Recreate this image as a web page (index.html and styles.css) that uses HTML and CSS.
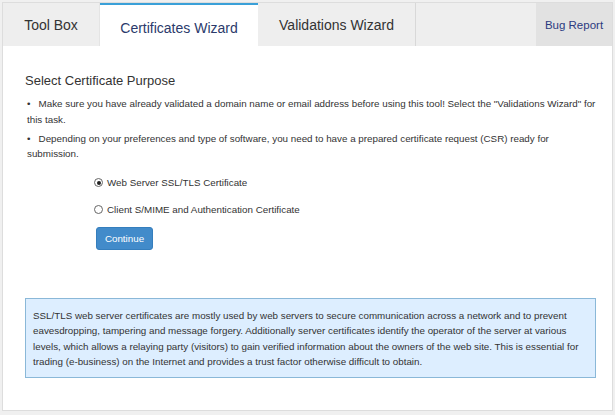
FILE: index.html
```html
<!DOCTYPE html>
<html>
<head>
<meta charset="utf-8">
<link rel="stylesheet" href="styles.css">
</head>
<body>
<div class="frame">
  <div class="tabs">
    <div class="tab tab-toolbox">Tool Box</div>
    <div class="tab tab-active">Certificates Wizard</div>
    <div class="tab tab-valid">Validations Wizard</div>
    <div class="tab-spacer"></div>
    <div class="tab-bug">Bug Report</div>
  </div>
  <div class="content">
    <h2 class="title">Select Certificate Purpose</h2>
    <p class="note">•&nbsp;&nbsp; Make sure you have already validated a domain name or email address before using this tool! Select the "Validations Wizard" for this task.</p>
    <p class="note">•&nbsp;&nbsp; Depending on your preferences and type of software, you need to have a prepared certificate request (CSR) ready for<br>submission.</p>
    <div class="options">
      <label class="opt"><span class="radio checked"></span>Web Server SSL/TLS Certificate</label>
      <label class="opt"><span class="radio"></span>Client S/MIME and Authentication Certificate</label>
      <div><button class="btn">Continue</button></div>
    </div>
    <div class="info">SSL/TLS web server certificates are mostly used by web servers to secure communication across a network and to prevent eavesdropping, tampering and message forgery. Additionally server certificates identify the operator of the server at various levels, which allows a relaying party (visitors) to gain verified information about the owners of the web site. This is essential for trading (e-business) on the Internet and provides a trust factor otherwise difficult to obtain.</div>
  </div>
</div>
</body>
</html>
```
FILE: styles.css
```css
html, body { margin: 0; padding: 0; }
body {
  background: #f0f0f0;
  font-family: "Liberation Sans", Arial, sans-serif;
  color: #333;
  padding: 2px 2px 4px 2px;
}
.frame {
  background: #fff;
  border: 1px solid #ddd;
  height: 409px;
  box-sizing: border-box;
  display: flex;
  flex-direction: column;
}
.tabs {
  display: flex;
  height: 43px;
  background: #eeeeee;
  flex: none;
}
.tab {
  box-sizing: border-box;
  display: flex;
  align-items: center;
  justify-content: center;
  font-size: 14px;
  color: #333;
  padding-top: 1px;
}
.tab-toolbox { width: 97px; border-right: 1px solid #e4e4e4; }
.tab-active {
  width: 158px;
  background: #fff;
  color: #2b3a6b;
  border-top: 2px solid #3aa0d8;
  padding-top: 4px;
  height: 44px;
}
.tab-valid { width: 158px; border-right: 1px solid #d8d8d8; }
.tab-spacer { flex: 1; }
.tab-bug {
  width: 76px;
  background: #e2e2e2;
  display: flex;
  align-items: center;
  justify-content: center;
  font-size: 11.5px;
  color: #2b3a80;
  padding-top: 1px;
  box-sizing: border-box;
}
.content {
  padding: 27px 8px 0 22px;
}
.title {
  font-size: 13px;
  line-height: 16px;
  font-weight: normal;
  margin: 0 0 7px 0;
  color: #333;
}
.note {
  font-size: 9.8px;
  line-height: 15.5px;
  margin: 0 0 3.5px 0;
  padding-left: 2px;
  color: #333;
}
.options {
  padding: 4px 0 0 69px;
  display: flex;
  flex-direction: column;
}
.opt {
  font-size: 9.8px;
  display: flex;
  align-items: center;
  height: 27px;
  color: #333;
}
.radio {
  width: 9px;
  height: 9px;
  border: 1px solid #666;
  border-radius: 50%;
  margin-right: 4px;
  box-sizing: border-box;
  position: relative;
  background: #fff;
}
.radio.checked::after {
  content: "";
  position: absolute;
  left: 1.5px; top: 1.5px;
  width: 4px; height: 4px;
  border-radius: 50%;
  background: #222;
}
.btn {
  margin-top: 3.5px;
  margin-left: 2px;
  background: #428bca;
  border: 1px solid #357ebd;
  color: #fff;
  font-family: "Liberation Sans", Arial, sans-serif;
  font-size: 9.8px;
  width: 57px;
  height: 23px;
  border-radius: 3px;
  padding: 0;
}
.info {
  margin-top: 48px;
  margin-right: 8px;
  background: #ddeeff;
  border: 1px solid #8ab8d8;
  font-size: 9.8px;
  line-height: 15.6px;
  padding: 9px 7px 7px 7px;
  color: #333;
}
```
